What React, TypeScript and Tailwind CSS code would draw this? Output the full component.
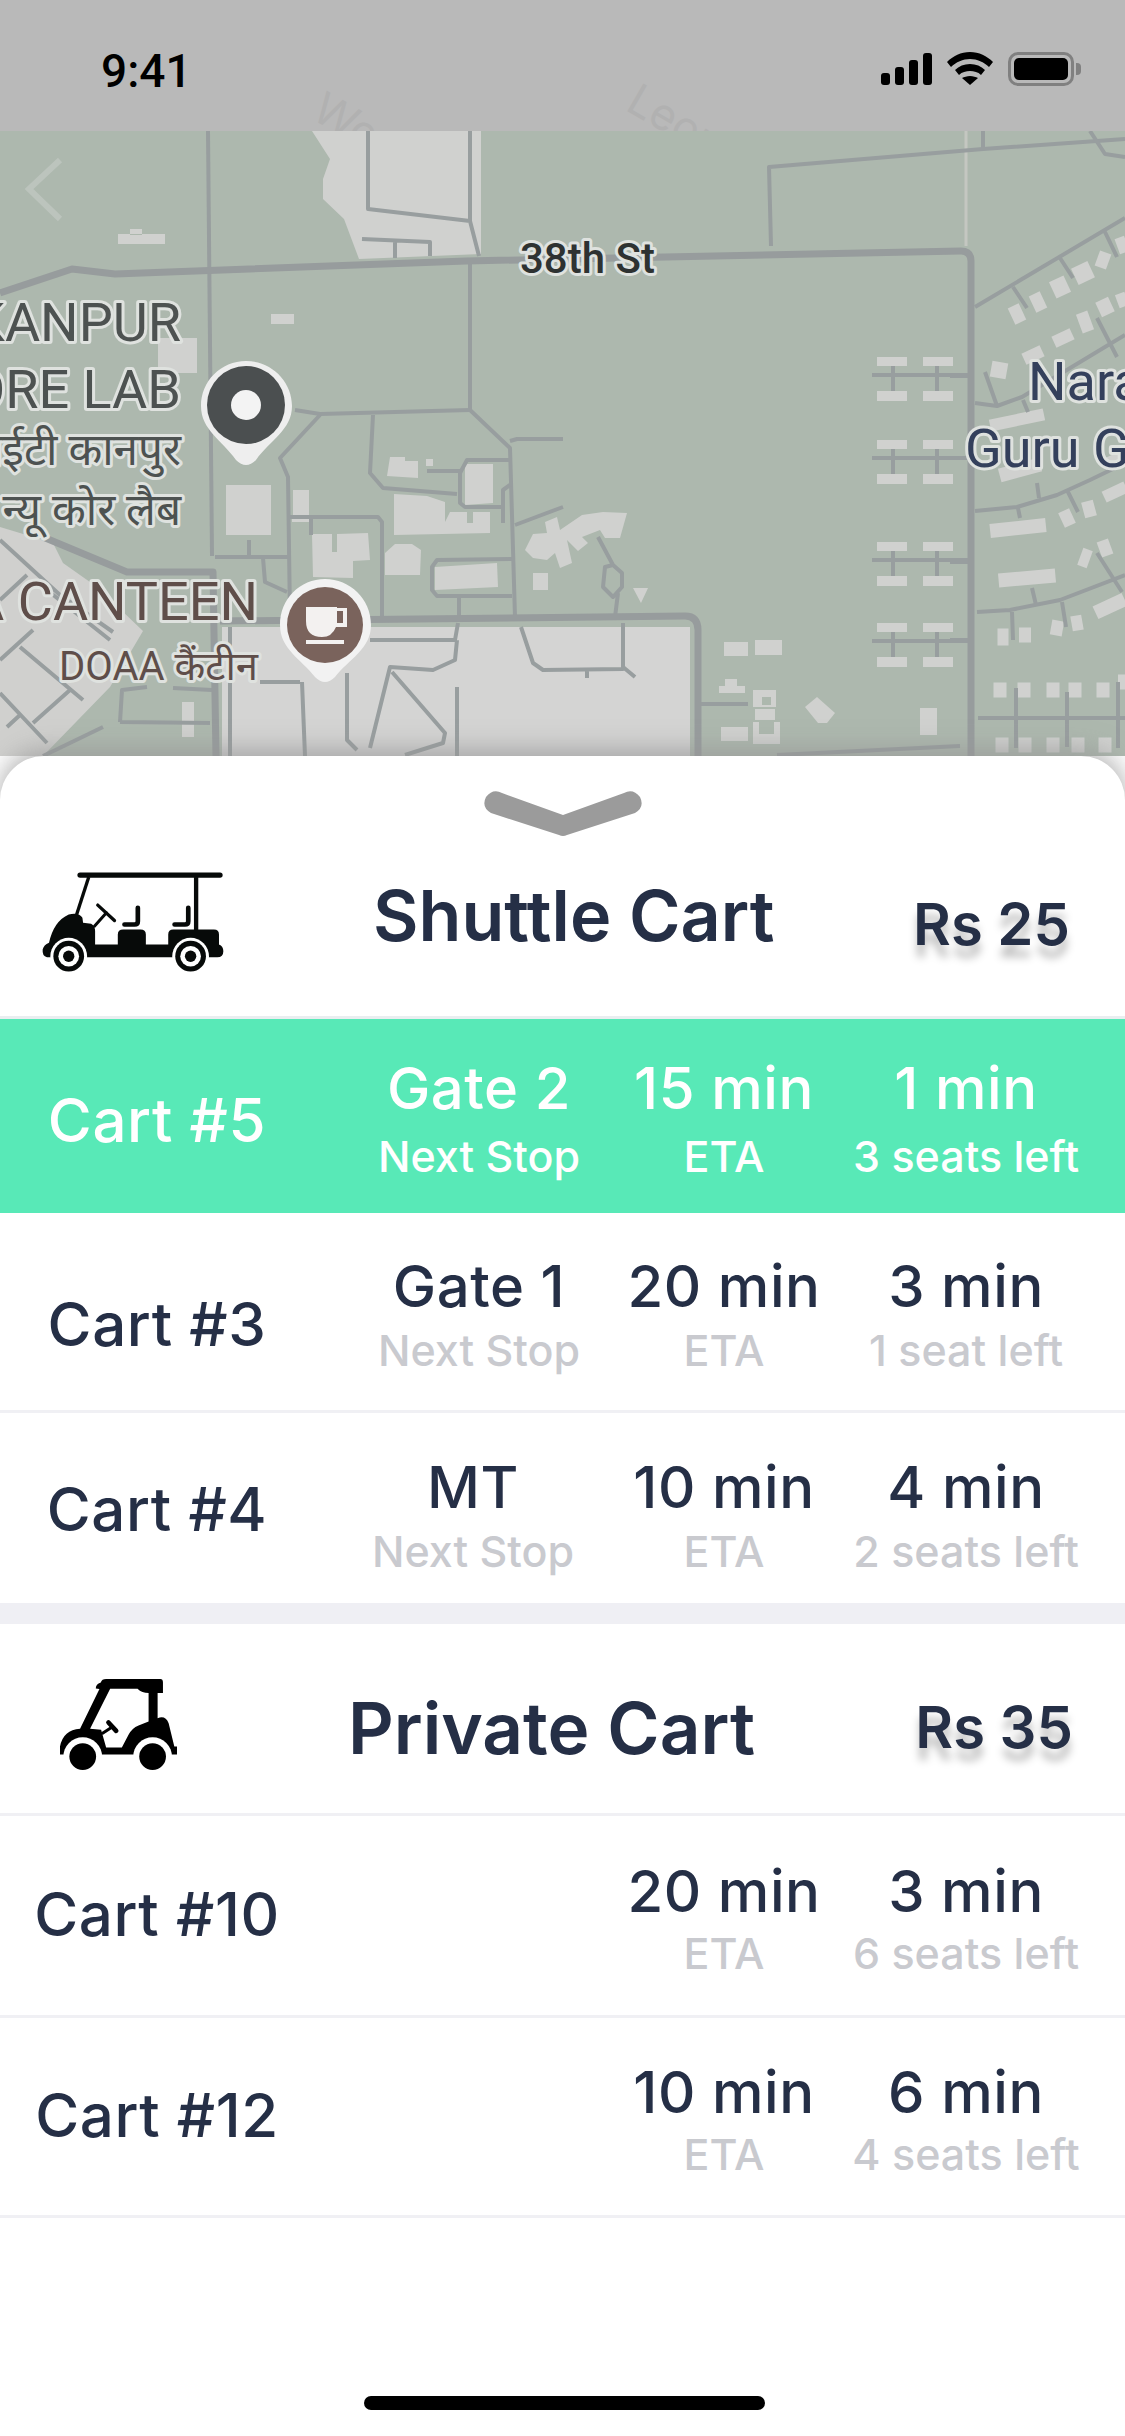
const parcels = [357, 440, 542, 623];

const blocks = [
  "M312 131H481V254L359 259L344 219L323 199V179L330 159Z",
  "M390 457H405V461H418V478L387 476Z",
  "M426 459h7v7h-7Z",
  "M465 464H493V503L465 505Z",
  "M394 494L427 496L445 502V522L450 512H467V523H473V512H490V533L394 535Z",
  "M293 490h16v25h-16ZM292 519h17v3h-17Z",
  "M312 534H332V552H337V534L368 533L370 560L353 561V578L313 577Z",
  "M385 553L395 544H412L421 550L420 575H385Z",
  "M435 567L497 563L498 587L435 590Z",
  "M533 573h15v17h-15Z",
  "M525 550L533 534L547 533L545 522L557 517L560 530L582 515L603 512L627 513L620 538H605L600 530L582 537L588 543L578 551L567 540L572 563L560 568L555 553L547 560L533 558Z",
  "M633 588H648L641 603Z",
  "M118 234h47v10h-47ZM130 229h12v6h-12Z",
  "M271 314h23v10h-23Z",
  "M158 338h39v35h-39Z",
  "M226 485h45v50h-45Z",
  "M182 702h12v35h-12Z",
  "M724 642h24v14h-24ZM755 640h27v15h-27ZM719 686h26v7h-26ZM725 679h12v7h-12Z",
  "M753 690h23v17h-23ZM762 697v8h9v-8ZM755 709h20v11h-20ZM753 722h6v12h15v-12h6v22h-27ZM721 727h27v14h-27Z",
  "M805 707L817 697L835 713L827 723H818Z",
  "M920 708h17v27h-17Z",
];

const houses = [
  [1017, 314, 12, 18, -25], [1038, 302, 12, 18, -25], [1060, 287, 16, 18, -25], [1083, 273, 18, 18, -25],
  [1103, 260, 12, 16, 20], [1122, 245, 10, 16, -20], [1105, 307, 14, 16, -25], [1122, 300, 10, 14, -20],
  [1085, 322, 12, 20, -20], [1063, 338, 20, 12, -25], [1033, 355, 20, 12, -25], [999, 370, 16, 16, 10],
  [1017, 420, 55, 12, -12], [1020, 470, 42, 14, -15], [1115, 460, 24, 12, -25], [1018, 528, 56, 14, -6],
  [1067, 518, 12, 16, -25], [1089, 509, 12, 16, -15], [1115, 492, 24, 12, -25], [1027, 578, 57, 14, -5],
  [1085, 558, 10, 18, 20], [1105, 548, 12, 16, -20], [1110, 606, 32, 14, -25], [1003, 637, 11, 17, 0],
  [1025, 635, 12, 15, 0], [1057, 628, 12, 15, 10], [1077, 623, 11, 15, -10], [1000, 690, 13, 15, 0],
  [1024, 690, 13, 15, 0], [1053, 690, 13, 15, 0], [1075, 690, 13, 15, 0], [1103, 690, 13, 15, 0],
  [1122, 682, 8, 15, 0], [1002, 745, 13, 15, 0], [1025, 745, 13, 15, 0], [1053, 745, 13, 15, 0],
  [1078, 745, 13, 15, 0], [1105, 745, 13, 15, 0],
];

const roads = [
  "M208 131L212 556",
  "M368 131V209L470 221L479 256",
  "M470 131V221",
  "M362 239L430 242V256M395 242V258",
  "M771 246L769 167L983 149L1125 139",
  "M983 131V149",
  "M1090 131L1105 154L1125 157",
  "M470 261V410L510 448L515 617",
  "M295 410L320 414L470 410",
  "M510 441L517 439H563",
  "M320 415L280 458L288 477L290 617",
  "M373 415L370 473L383 488L457 494",
  "M510 460H467L460 473V503L465 507H502",
  "M427 471H460",
  "M503 523V490L510 485",
  "M515 525L563 507",
  "M290 517H378L382 522V617",
  "M311 518V535",
  "M512 559L437 560L432 567V590L437 596H512",
  "M459 596V617",
  "M598 537L613 565L605 567L603 587L613 597L622 587V573L613 565M618 593L615 617",
  "M215 557H288M249 540V555M263 558L265 582L287 592",
  "M0 540L60 595L113 632M47 590L110 640M0 600L27 575M0 660L33 630M20 647L83 700M0 693L47 743M33 723L70 690M7 727L20 715",
  "M120 722L122 690L147 687M120 722L210 723M43 756L103 727M173 688L212 690",
  "M230 627V756M370 640H455L458 623M457 640L455 660L433 670L390 667L370 748",
  "M392 672L445 733L443 743L405 755M347 673V740L357 750M302 682L305 756M260 682H300M457 687V756",
  "M521 627L533 663L543 670L623 669V623M623 667L635 677M587 669V678",
  "M698 704H748",
  "M777 755L960 746",
  "M975 307L1125 218M1013 287L1027 308M1060 258L1073 278M1105 232L1117 257",
  "M975 403L997 406L1022 397L1125 335M985 372L997 406M1097 318L1117 357M1023 400L1028 412",
  "M975 511L1017 507L1057 495L1090 480L1125 463M1037 483L1039 498M1018 508L1020 518M1068 492L1078 512",
  "M977 612L1010 610L1060 600L1125 575M1032 588L1036 605M1097 553L1122 592M1062 602L1066 627M1012 612L1013 640",
  "M978 718H1125M1016 688V748M1067 692V747M1118 682V748",
  "M950 376H968M950 458H968M950 562H968M950 640H968",
];

const Map = () => (
  <svg className="block w-full h-[625px]" viewBox="0 131 1125 625">
    <rect x="0" y="131" width="1125" height="625" fill="#adb8ae" />
    <path d="M222 627H690V756H222Z" fill="#d4d4d3" />
    <path d="M368 131V209L470 221V131Z" fill="#cbcbc7" />
    <path d="M0 527L53 543L63 563L97 587L143 631L110 687L43 756H0Z" fill="#d0d0ce" />
    <path d="M966 131V246" stroke="#c4c7c1" strokeWidth="3" />
    {blocks.map((d) => (
      <path key={d} d={d} fill="#d0d1cf" fillRule="evenodd" />
    ))}
    {parcels.map((y) => (
      <g key={y}>
        <path d={`M872 ${y + 18}H968M893 ${y + 9}V${y + 34}M937 ${y + 9}V${y + 34}`} stroke="#989e9f" strokeWidth="4" fill="none" />
        <path d={`M877 ${y}h30v9h-30zM923 ${y}h30v9h-30zM877 ${y + 34}h30v10h-30zM923 ${y + 34}h30v10h-30z`} fill="#d0d1cf" />
      </g>
    ))}
    {houses.map(([cx, cy, w, h, r], i) => (
      <rect key={i} x={cx - w / 2} y={cy - h / 2} width={w} height={h} fill="#d0d1cf" transform={`rotate(${r} ${cx} ${cy})`} />
    ))}
    <g fill="none" stroke="#989e9f" strokeWidth="4" strokeLinejoin="round">
      {roads.map((d) => (
        <path key={d} d={d} />
      ))}
    </g>
    <g fill="none" stroke="#979c9d" strokeWidth="7" strokeLinejoin="round">
      <path d="M0 293L72 269L115 274L466 261L961 251Q971 251 971 261V756" />
      <path d="M43 537L127 572H213L216 756" />
      <path d="M220 621L685 616Q698 616 698 630V756" />
    </g>
    <path d="M60 160L29 189L60 219" fill="none" stroke="#bcc4bd" strokeWidth="6" />

    <g className="font-['Roboto','Noto_Sans',sans-serif]" style={{ paintOrder: "stroke" }} stroke="#dfe2df" strokeWidth="6" strokeLinejoin="round">
      <text x="520" y="273" fontSize="42" fontWeight="500" fill="#2e3232">38th St</text>
      <text x="181" y="341" textAnchor="end" fontSize="54" fill="#4d5251">IIT KANPUR</text>
      <text x="181" y="408" textAnchor="end" fontSize="54" fill="#4d5251">CORE LAB</text>
      <text x="181" y="465" textAnchor="end" fontSize="44" fill="#4d5251">आईआईटी कानपुर</text>
      <text x="181" y="525" textAnchor="end" fontSize="44" fill="#4d5251">न्यू कोर लैब</text>
      <text x="258" y="620" textAnchor="end" fontSize="54" fill="#5f4e4a">DOAA CANTEEN</text>
      <text x="258" y="680" textAnchor="end" fontSize="40" fill="#5f4e4a">DOAA कैंटीन</text>
      <text x="1028" y="400" fontSize="54" fill="#34405c">Nara</text>
      <text x="965" y="467" fontSize="54" fill="#34405c">Guru G</text>
    </g>

    <path d="M246 361C221 361 201 381 201 406C201 430 222 440 236 460Q246 470 256 460C270 440 292 430 292 406C292 381 271 361 246 361Z" fill="#eeeeee" />
    <circle cx="246" cy="405" r="39" fill="#4b4f50" />
    <circle cx="246" cy="405" r="15" fill="#f3f3f3" />

    <path d="M325 579C300 579 280 599 280 625C280 649 301 659 315 677Q325 687 335 677C349 659 371 649 371 625C371 599 350 579 325 579Z" fill="#f2f2f2" />
    <circle cx="325" cy="625" r="38" fill="#7a635c" />
    <path d="M306 607H337V608H347V627H336Q332 637 322 637Q306 637 306 621ZM337 611V623H343V611ZM306 640H344V644H306Z" fill="#f3f1f0" fillRule="evenodd" />
  </svg>
);

const ShuttleIcon = () => (
  <svg className="w-[182px] h-[102px] shrink-0" viewBox="125 150 545 305">
    <rect x="231" y="154" width="435" height="16" rx="8" fill="#070a09" />
    <path d="M265 168L228 282" stroke="#070a09" strokeWidth="10" />
    <rect x="580" y="168" width="13" height="165" fill="#070a09" />
    <path
      d="M127 385Q130 372 146 365Q160 300 205 280Q235 272 246 290L248 305L272 308Q284 315 284 330V370H352V340Q352 325 368 325H420Q436 325 436 340V370H503V340Q503 325 518 325H640Q655 325 655 340V370Q668 375 668 390Q668 408 650 408H140Q125 405 127 385Z"
      fill="#070a09"
    />
    <circle cx="205" cy="405" r="55" fill="#fff" />
    <circle cx="570" cy="405" r="55" fill="#fff" />
    <circle cx="205" cy="405" r="46" fill="#070a09" />
    <circle cx="570" cy="405" r="46" fill="#070a09" />
    <circle cx="205" cy="405" r="31" fill="#fff" />
    <circle cx="570" cy="405" r="31" fill="#fff" />
    <circle cx="205" cy="405" r="17" fill="#070a09" />
    <circle cx="570" cy="405" r="17" fill="#070a09" />
    <g fill="none" stroke="#070a09" strokeLinecap="round" strokeLinejoin="round">
      <path d="M292 252L342 298" strokeWidth="10" />
      <path d="M318 275L282 315" strokeWidth="9" />
      <path d="M412 260V300Q412 310 402 310H372" strokeWidth="14" />
      <path d="M563 260V300Q563 310 553 310H522" strokeWidth="14" />
    </g>
  </svg>
);

const PrivateIcon = () => (
  <svg className="w-[117px] h-[91px] shrink-0" viewBox="180 298 350 272">
    <path
      d="M287 326Q287 312 302 308Q305 298 318 298H480Q488 298 488 308V340H472V415Q495 405 505 430L522 500H530V524H180V500Q190 450 240 447L298 328Z"
      fill="#000"
    />
    <path d="M330 327H412Q425 340 445 340V425L415 437Q395 445 385 465L365 503H318L303 450L270 447Z" fill="#fff" />
    <path d="M305 462L335 442" stroke="#000" strokeWidth="9" />
    <path d="M325 428L348 453" stroke="#000" strokeWidth="14" strokeLinecap="round" />
    <circle cx="248" cy="530" r="58" fill="#fff" />
    <circle cx="457" cy="530" r="58" fill="#fff" />
    <circle cx="248" cy="530" r="40" fill="#000" />
    <circle cx="457" cy="530" r="40" fill="#000" />
  </svg>
);

const StatusBar = () => (
  <div className="relative h-[131px] bg-[#b9b9b9] flex items-start justify-between overflow-hidden pt-[49px] pl-[101px] pr-[44px]">
    <span className="absolute left-[312px] top-[92px] rotate-[30deg] text-[44px] text-[#b1b1b1]">Wor</span>
    <span className="absolute left-[625px] top-[88px] rotate-[30deg] text-[44px] text-[#b1b1b1]">Leon</span>
    <span className="relative text-[46px] leading-[44px] font-medium text-black font-['Roboto',sans-serif]">9:41</span>
    <div className="relative flex items-start gap-[15px] pt-[3px]">
      <svg className="w-[51px] h-[32px] mt-[1px]" viewBox="0 0 51 32" fill="#000">
        <rect x="0" y="20" width="9" height="12" rx="3" />
        <rect x="14" y="14" width="9" height="18" rx="3" />
        <rect x="28" y="7" width="9" height="25" rx="3" />
        <rect x="42" y="0" width="9" height="32" rx="3" />
      </svg>
      <svg className="w-[46px] h-[33px]" viewBox="0 0 46 33" fill="#000">
        <path d="M23 0C14 0 6 4 0 10L4 15C9 10 16 7 23 7C30 7 37 10 42 15L46 10C40 4 32 0 23 0Z" />
        <path d="M23 12C17 12 12 14 8 18L12 23C15 20 19 19 23 19C27 19 31 20 34 23L38 18C34 14 29 12 23 12Z" />
        <path d="M23 24C20 24 17 25 15 26L23 33L31 26C29 25 26 24 23 24Z" />
      </svg>
      <div className="flex items-center gap-[2px]">
        <div className="w-[66px] h-[34px] rounded-[10px] border-[3px] border-[#808080] p-[3px]">
          <div className="w-full h-full rounded-[5px] bg-black" />
        </div>
        <div className="w-[5px] h-[12px] rounded-r-[4px] bg-[#808080]" />
      </div>
    </div>
  </div>
);

const cartRows = [
  {
    name: "Cart #5", stop: "Gate 2", eta: "15 min", wait: "1 min", seats: "3 seats left", active: true,
    rowClass: "h-[194px] bg-[#58e9b7]", namePad: "pt-[69px]", cellPad: "pt-[37px]", subPad: "mt-[4px]", stopShift: "",
  },
  {
    name: "Cart #3", stop: "Gate 1", eta: "20 min", wait: "3 min", seats: "1 seat left",
    rowClass: "h-[200px] border-b-[3px] border-[#f0f0f4]", namePad: "pt-[79px]", cellPad: "pt-[41px]", subPad: "", stopShift: "",
  },
  {
    name: "Cart #4", stop: "MT", eta: "10 min", wait: "4 min", seats: "2 seats left",
    rowClass: "h-[190px]", namePad: "pt-[64px]", cellPad: "pt-[42px]", subPad: "", stopShift: "-translate-x-[6px]",
  },
];

const privateRows = [
  {
    name: "Cart #10", eta: "20 min", wait: "3 min", seats: "6 seats left",
    rowClass: "h-[202px]", namePad: "pt-[66px]", cellPad: "pt-[43px]", subPad: "-mt-[2px]",
  },
  {
    name: "Cart #12", eta: "10 min", wait: "6 min", seats: "4 seats left",
    rowClass: "h-[200px]", namePad: "pt-[65px]", cellPad: "pt-[42px]", subPad: "-mt-[2px]",
  },
];

type CellProps = { top: string; sub: string; active?: boolean; subPad: string };

const Cell = ({ top, sub, active, subPad }: CellProps) => (
  <div className="flex flex-col items-center whitespace-nowrap">
    <span className={`text-[58px] leading-[64px] font-medium tracking-[0.01em] ${active ? "text-white" : "text-[#252f46]"}`}>{top}</span>
    <span className={`text-[43px] leading-[64px] font-medium ${subPad} ${active ? "text-white" : "text-[#c9cacf]"}`}>{sub}</span>
  </div>
);

const App = () => {
  return (
    <div className="w-[1125px] h-[2436px] relative overflow-hidden bg-white font-['Inter',sans-serif]">
      <StatusBar />
      <Map />
      <div className="relative z-10 h-[1680px] bg-white rounded-t-[44px] shadow-[0_-6px_26px_rgba(150,150,150,0.75)]">
        <div className="flex justify-center pt-[34px]">
          <svg className="w-[160px] h-[46px]" viewBox="0 0 160 46" fill="#9b9b9b">
            <path d="M3 7Q10 -2 19 3L80 25L141 3Q150 -2 157 7Q162 17 152 23L84 45Q80 47 76 45L8 23Q-2 17 3 7Z" />
          </svg>
        </div>

        <div className="h-[183px] flex items-start pl-[42px] border-b-[3px] border-[#e9eef0]">
          <div className="pt-[35px]">
            <ShuttleIcon />
          </div>
          <h2 className="ml-[149px] pt-[37px] text-[70px] leading-[86px] font-semibold text-[#252f46] whitespace-nowrap">Shuttle Cart</h2>
          <span className="absolute right-[55px] top-[132px] text-[58px] leading-[72px] font-semibold text-[#252f46] [text-shadow:0_12px_8px_rgba(0,0,0,0.25)]">Rs 25</span>
        </div>

        {cartRows.map((row) => (
          <div key={row.name} className={`${row.rowClass} grid grid-cols-[334px_290px_200px_284px]`}>
            <div className={`pr-[20px] text-center text-[60px] leading-[64px] font-medium tracking-[0.01em] whitespace-nowrap ${row.namePad} ${row.active ? "text-white" : "text-[#252f46]"}`}>
              {row.name}
            </div>
            <div className={`${row.cellPad} ${row.stopShift}`}>
              <Cell top={row.stop} sub="Next Stop" active={row.active} subPad={row.subPad} />
            </div>
            <div className={row.cellPad}>
              <Cell top={row.eta} sub="ETA" active={row.active} subPad={row.subPad} />
            </div>
            <div className={row.cellPad}>
              <Cell top={row.wait} sub={row.seats} active={row.active} subPad={row.subPad} />
            </div>
          </div>
        ))}

        <div className="h-[21px] bg-[#efeff4]" />

        <div className="relative h-[192px] flex items-start pl-[60px] border-b-[3px] border-[#f0f0f4]">
          <div className="pt-[55px]">
            <PrivateIcon />
          </div>
          <h2 className="ml-[171px] pt-[61px] text-[71px] leading-[86px] font-semibold text-[#252f46] whitespace-nowrap">Private Cart</h2>
          <span className="absolute right-[52px] top-[67px] text-[58px] leading-[72px] font-semibold text-[#252f46] [text-shadow:0_12px_8px_rgba(0,0,0,0.25)]">Rs 35</span>
        </div>

        {privateRows.map((row) => (
          <div key={row.name} className={`${row.rowClass} border-b-[3px] border-[#f0f0f4] grid grid-cols-[334px_290px_200px_284px]`}>
            <div className={`pr-[20px] text-center text-[60px] leading-[64px] font-medium tracking-[0.01em] text-[#252f46] whitespace-nowrap ${row.namePad}`}>{row.name}</div>
            <div />
            <div className={row.cellPad}>
              <Cell top={row.eta} sub="ETA" subPad={row.subPad} />
            </div>
            <div className={row.cellPad}>
              <Cell top={row.wait} sub={row.seats} subPad={row.subPad} />
            </div>
          </div>
        ))}

        <div className="absolute left-[364px] top-[1640px] w-[401px] h-[14px] rounded-full bg-black" />
      </div>
    </div>
  );
};

export default App;
